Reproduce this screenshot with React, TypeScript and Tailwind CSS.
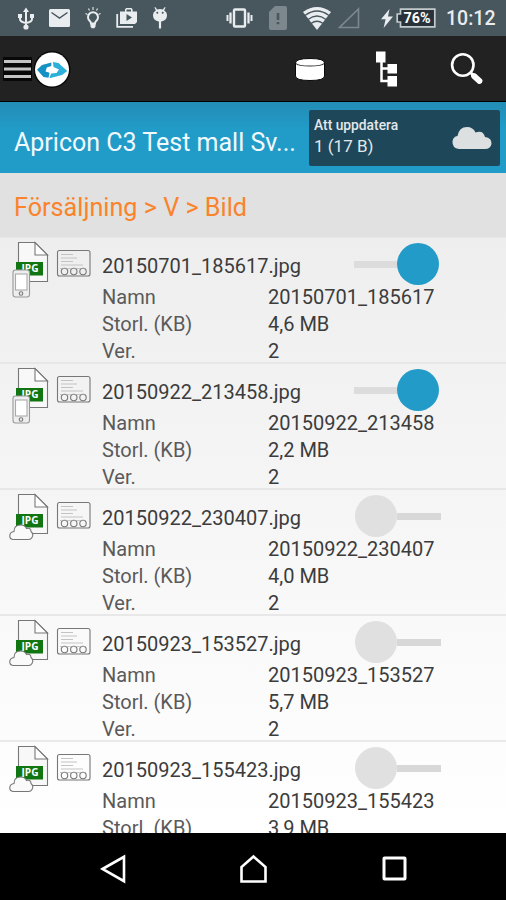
import type { ReactNode } from "react";

type FileEntry = {
  name: string;
  size: string;
  version: string;
  onDevice: boolean;
};

const files: FileEntry[] = [
  { name: "20150701_185617", size: "4,6 MB", version: "2", onDevice: true },
  { name: "20150922_213458", size: "2,2 MB", version: "2", onDevice: true },
  { name: "20150922_230407", size: "4,0 MB", version: "2", onDevice: false },
  { name: "20150923_153527", size: "5,7 MB", version: "2", onDevice: false },
  { name: "20150923_155423", size: "3,9 MB", version: "2", onDevice: false },
];

function StatusBar() {
  return (
    <div className="flex h-9 shrink-0 items-center bg-[#48565e] text-[#e9edef]">
      {/* usb */}
      <svg className="ml-[17px] h-6 w-[18px] shrink-0" viewBox="0 0 18 24" fill="none" stroke="currentColor" strokeWidth="2">
        <path d="M9 5v16M3 10v3q0 3 6 4q6-1 6-4v-3" />
        <path d="M9 1.5l3 4.5H6zM1 8h4v4H1zM13 8h4v4h-4z" fill="currentColor" stroke="none" />
        <circle cx="9" cy="21" r="2.6" fill="currentColor" stroke="none" />
      </svg>
      {/* mail */}
      <svg className="ml-[14px] h-[18px] w-[21px] shrink-0" viewBox="0 0 21 18">
        <rect width="21" height="18" rx="1.5" fill="currentColor" />
        <path d="M2.5 3.5l8 5.5l8-5.5" fill="none" stroke="#48565e" strokeWidth="1.5" />
      </svg>
      {/* light bulb */}
      <svg className="ml-[15px] h-[22px] w-4 shrink-0" viewBox="0 0 16 22" fill="none" stroke="currentColor">
        <path d="M8 0v3M3.5 1.500l1 2M12.500 1.500l-1 2M.5 6.500l2 1M15.500 6.500l-2 1" strokeWidth="1.100" />
        <path d="M6 16.500q0-1.500-1.200-2.500a5 5 0 1 1 6.400 0Q10 15 10 16.500z" strokeWidth="2" />
        <path d="M5.500 16h5v3.500l-1.200 1.700H6.700l-1.200-1.700z" fill="currentColor" stroke="none" />
      </svg>
      {/* play store bag */}
      <svg className="ml-[15px] h-5 w-[22px] shrink-0" viewBox="0 0 22 20">
        <path d="M1.200 6v12.800H17" fill="none" stroke="currentColor" strokeWidth="1.800" />
        <path d="M4 3.500h5V1.200L10.200 0h5.200l1.200 1.200v2.300H21V14l-2 2H4zm6.500 0H15v-2h-4.500z" fill="currentColor" />
        <path d="M10.500 6v7l5.500-3.500z" fill="#48565e" />
      </svg>
      {/* debugging android */}
      <svg className="ml-[14px] h-[22px] w-4 shrink-0" viewBox="0 0 16 22">
        <path d="M3.200 0l2 2.500q2.800-1 5.600 0l2-2.500 .8.500-1.500 2.900Q15 5 15 8.500q0 5.500-7 6.300Q1 14 1 8.500Q1 5 3.900 3.400L2.400.5z" fill="currentColor" />
        <path d="M8 14v7.500" stroke="currentColor" strokeWidth="2.200" />
        <circle cx="5.300" cy="5.800" r="1" fill="#48565e" />
        <circle cx="10.700" cy="5.800" r="1" fill="#48565e" />
      </svg>
      {/* vibrate */}
      <svg className="ml-[58px] h-5 w-[27px] shrink-0" viewBox="0 0 27 20" fill="none" stroke="currentColor" strokeWidth="2">
        <rect x="8" y="1.500" width="11" height="17" rx="1" strokeWidth="2.400" />
        <path d="M4.500 4.500v11M22.500 4.500v11" strokeWidth="2.300" />
        <path d="M1.500 7v6M25.500 7v6" />
      </svg>
      {/* missing sim */}
      <svg className="ml-[16px] h-6 w-[18px] shrink-0" viewBox="0 0 18 24">
        <path d="M6 0h10q2 0 2 2v20q0 2-2 2H2q-2 0-2-2V6z" fill="#7d888e" />
        <path d="M9 7v7M9 16v2.300" stroke="#48565e" strokeWidth="2.600" />
      </svg>
      {/* wifi */}
      <svg className="ml-[16px] h-[23px] w-7 shrink-0" viewBox="0 0 28 23">
        <path d="M0 5Q14-5 28 5L14 23z" fill="currentColor" />
        <path d="M2 8.500q12-9 24 0M5 12.500q9-7 18 0M8 16.500q6-4.500 12 0" fill="none" stroke="#48565e" strokeWidth="1.300" />
      </svg>
      {/* mobile signal */}
      <svg className="ml-[7px] h-[22px] w-[22px] shrink-0" viewBox="0 0 22 22" fill="none" stroke="#7d888e" strokeWidth="1.600">
        <path d="M1.500 20.500H20.500V2z" />
      </svg>
      {/* charging battery */}
      <svg className="ml-[21px] h-[19px] w-3 shrink-0" viewBox="0 0 12 19">
        <path d="M8.500 0L0 10.200h4.600L2.600 19L12 7.500H7z" fill="currentColor" />
      </svg>
      <svg className="ml-[3px] h-5 w-10 shrink-0" viewBox="0 0 40 20">
        <path d="M4.500 1.200H38.800V18.800H4.500V14H1.200V6H4.500z" fill="#293239" stroke="#c3cacd" strokeWidth="1.700" />
        <text x="21" y="15.200" textAnchor="middle" fill="#fff" className="font-['Roboto'] text-[14.500px] font-bold" textLength="27" lengthAdjust="spacingAndGlyphs">76%</text>
      </svg>
      <span className="ml-[10px] pt-[2px] text-[19.500px] leading-9 font-medium">10:12</span>
    </div>
  );
}

function AppBar() {
  return (
    <div className="flex h-[66px] shrink-0 items-center border-b border-black bg-[#222]">
      <svg className="ml-[3px] h-[24px] w-[29px] shrink-0" viewBox="0 0 29 24">
        <rect width="29" height="24" fill="#080808" />
        <path d="M1 4.500h27M1 12h27M1 19.500h27" stroke="#c4c4c4" strokeWidth="2.800" />
      </svg>
      <svg className="ml-[2px] h-[38px] w-[38px] shrink-0" viewBox="0 0 38 38">
        <circle cx="18" cy="19.500" r="18.500" fill="#090909" />
        <circle cx="18" cy="19.500" r="17" fill="#fff" />
        <path d="M3 19.800L8 15L17.300 12.500V16L12.800 17.500L11.500 21.500L15.500 22.800L14.500 27.800L9.500 27z" fill="#1591c4" />
        <path d="M19 12L24.500 13L33.300 21L28 25L15.500 28.200L17 23.500L22.500 23L25 19.500L19.500 17z" fill="#2cb0da" />
      </svg>
      {/* database */}
      <svg className="ml-[223px] h-[26px] w-[30px] shrink-0" viewBox="0 0 30 26">
        <path d="M0.500 7Q.5 2.500 15 2.500T29.500 7V20Q29.500 24.500 15 24.500T.5 20z" fill="#fff" stroke="#080808" strokeWidth="1" />
        <path d="M1 7.500Q3 10 15 10T29 7.500" fill="none" stroke="#333" strokeWidth="1.200" />
      </svg>
      {/* folder tree */}
      <svg className="ml-[51px] h-[37px] w-[22px] shrink-0" viewBox="0 0 22 37">
        <path d="M0 1.500h9.500v11H0zM11.500 14h9.500v9.500H11.500zM11.500 26h9.500v10.500H11.500z" fill="#fff" />
        <path d="M5.500 11V31H12M5.500 18.500H12" fill="none" stroke="#fff" strokeWidth="2.500" />
      </svg>
      {/* search */}
      <svg className="ml-[52px] h-[34px] w-[34px] shrink-0" viewBox="0 0 34 34">
        <circle cx="12.800" cy="13" r="10.700" fill="none" stroke="#fff" strokeWidth="2.600" />
        <path d="M20.500 20.500l3 3" stroke="#fff" strokeWidth="3" />
        <path d="M24 24l5.500 5" stroke="#fff" strokeWidth="5.800" strokeLinecap="round" />
      </svg>
    </div>
  );
}

function Header() {
  return (
    <div className="flex h-[71px] shrink-0 items-start bg-linear-to-b from-[#238db5] to-[#219cc9] to-40%">
      <h1 className="ml-[14px] w-[295px] whitespace-nowrap pt-[24px] text-[25px] leading-[34px] text-[#f2fafd]">Apricon C3 Test mall Sv...</h1>
      <div className="mt-2 flex h-[56px] w-[191px] items-center justify-between rounded-[2px] bg-[#1e475a] pr-[8px] pl-[5px] text-[#e3e8ea]">
        <div className="pb-[4px]">
          <div className="text-[13.800px] leading-[20px] font-medium">Att uppdatera</div>
          <div className="text-[17px] leading-[22px]">1 (17 B)</div>
        </div>
        <svg className="h-6 w-10" viewBox="0 0 40 24">
          <path d="M7 23Q0 22 .5 15.500Q1 10.500 5.500 10Q7 1 15 1Q21 1 23.500 6.500Q31 3.500 33 11Q40 12 39.500 18Q38.500 23 33 23z" fill="#dce0e1" />
        </svg>
      </div>
    </div>
  );
}

function JpgIcon({ onDevice }: { onDevice: boolean }) {
  return (
    <svg className="ml-[8px] h-[60px] w-[42px] shrink-0" viewBox="0 1 42 60" fill="none" stroke="#777" strokeWidth="1.100">
      <path d="M10.500 5.500H27L39.500 18V44.500H10.500z" fill="#f8f8f8" />
      <path d="M27 5.500V18H39.500z" fill="#fff" />
      <rect x="8" y="25" width="27" height="13.500" fill="#117512" stroke="none" />
      <text x="22" y="35.300" textAnchor="middle" fill="#fff" stroke="none" className="font-['Open_Sans'] text-[10.500px] font-bold" textLength="17" lengthAdjust="spacingAndGlyphs">JPG</text>
      {onDevice ? (
        <>
          <rect x="5" y="33" width="16.500" height="27" rx="2.500" fill="#eee" stroke="#999" />
          <rect x="7.500" y="37" width="11.500" height="16" fill="#fff" stroke="#aaa" />
          <circle cx="13" cy="56.500" r="1.800" />
        </>
      ) : (
        <path d="M5 50.500Q1.500 50 1.800 46.500Q2 43 6 42.500Q6 36 12.500 36Q17 36 18.500 39.500Q23 38.500 23 42.500Q26 45 24 48.500Q23 50.500 20.500 50.500z" fill="#fafafa" />
      )}
    </svg>
  );
}

function FormIcon() {
  return (
    <svg className="mt-[11px] ml-[6px] h-7 w-9 shrink-0" viewBox="0 0 36 28" fill="none" stroke="#777" strokeWidth="1.100">
      <rect x="1.500" y="1.500" width="32.500" height="25.500" rx="2" />
      <path d="M5 5.500h12M5 9h16M5 12.500h12M5 16h22" stroke="#c3c3c3" />
      <circle cx="8.500" cy="22.500" r="3.200" />
      <circle cx="17.800" cy="22.500" r="3.200" />
      <circle cx="27" cy="22.500" r="3.200" />
      <path d="M4 19.500h26" stroke="#aaa" strokeWidth=".6" />
    </svg>
  );
}

function Toggle({ on }: { on: boolean }) {
  return (
    <div className="mt-[5px] ml-auto flex h-[42px] w-[87px] shrink-0 items-center">
      {on ? (
        <>
          <div className="h-[7px] w-[43px] bg-[#dcdcdc]" />
          <div className="size-[42px] rounded-full bg-[#229bc8]" />
        </>
      ) : (
        <>
          <div className="ml-[1px] size-[42px] rounded-full bg-[#e0e0e0]" />
          <div className="h-[7px] w-[44px] bg-[#d8d8d8]" />
        </>
      )}
    </div>
  );
}

function Detail({ label, children }: { label: string; children: ReactNode }) {
  return (
    <div className="flex h-[26.800px] text-[20px] leading-[27px]">
      <dt className="w-[166px] text-[#5a5a5a]">{label}</dt>
      <dd className="text-[#3c3c3c]">{children}</dd>
    </div>
  );
}

function FileRow({ file }: { file: FileEntry }) {
  return (
    <li className="flex h-[126px] shrink-0 border-b-2 border-[#e4e4e4]/80">
      <JpgIcon onDevice={file.onDevice} />
      <FormIcon />
      <div className="ml-[10px] w-[339px]">
        <div className="flex h-[46px]">
          <span className="pt-[14px] text-[20px] leading-[28px] text-[#3c3c3c]">{file.name}.jpg</span>
          <Toggle on={file.onDevice} />
        </div>
        <dl>
          <Detail label="Namn">{file.name}</Detail>
          <Detail label="Storl. (KB)">{file.size}</Detail>
          <Detail label="Ver.">{file.version}</Detail>
        </dl>
      </div>
    </li>
  );
}

function NavBar() {
  return (
    <div className="flex h-[67px] shrink-0 items-center bg-black pt-1">
      <svg className="ml-[100px] h-[30px] w-[27px]" viewBox="0 0 27 30" fill="none" stroke="#fff" strokeWidth="2.600">
        <path d="M2.500 15L24 2.800V27.200z" />
      </svg>
      <svg className="ml-[112px] h-[30px] w-[30px]" viewBox="0 0 30 30" fill="none" stroke="#fff" strokeWidth="2.600">
        <path d="M2.500 27.500V13L14.500 2.500L26.500 13V27.500z" />
      </svg>
      <svg className="ml-[113px] h-[25px] w-[25px]" viewBox="0 0 25 25" fill="none" stroke="#fff" strokeWidth="3">
        <rect x="2" y="2" width="21" height="21" rx=".5" />
      </svg>
    </div>
  );
}

export default function App() {
  return (
    <div className="flex h-[900px] w-[506px] flex-col overflow-hidden bg-white font-['Roboto',sans-serif]">
      <StatusBar />
      <AppBar />
      <Header />
      <nav className="h-[65px] shrink-0 border-b border-[#e8e8e8] bg-[#e1e1e1] pt-[18px] pl-[14px] text-[25.200px] leading-[34px] text-[#fa832b]">
        Försäljning &gt; V &gt; Bild
      </nav>
      <ul className="flex min-h-0 flex-1 flex-col overflow-hidden bg-linear-to-b from-[#eeeeee] to-white">
        {files.map((file) => (
          <FileRow key={file.name} file={file} />
        ))}
      </ul>
      <NavBar />
    </div>
  );
}
